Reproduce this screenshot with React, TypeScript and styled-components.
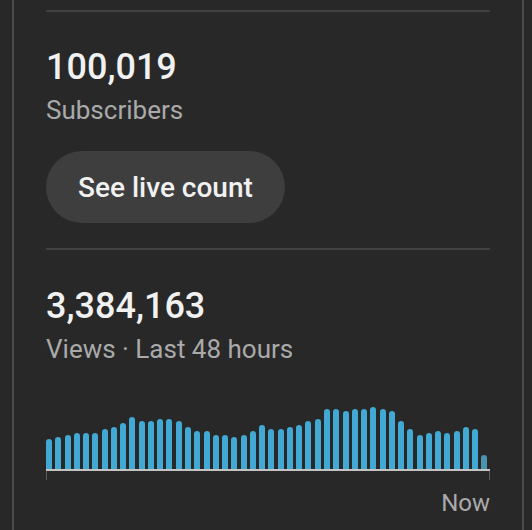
import React from "react";
import styled, { createGlobalStyle } from "styled-components";

const heights = [
  30, 32, 34, 36, 36, 36, 40, 42, 46, 52, 48, 48, 50, 50, 48, 42, 38, 38, 34, 34, 32, 34, 38, 44,
  40, 40, 42, 44, 48, 50, 60, 60, 58, 60, 60, 62, 60, 58, 48, 40, 34, 36, 38, 36, 38, 42, 40, 14,
];

const GlobalStyle = createGlobalStyle`
  html, body {
    margin: 0;
    padding: 0;
    background: #282828;
  }
  body {
    font-family: Roboto, "Noto Sans", sans-serif;
    -webkit-font-smoothing: antialiased;
  }
`;

const Card = styled.div`
  box-sizing: border-box;
  margin-left: 12px;
  width: 512px;
  height: 530px;
  border-left: 2px solid #4a4a4a;
  border-right: 2px solid #4a4a4a;
  padding: 10px 32px 0;
  overflow: hidden;
`;

const Divider = styled.div`
  height: 2px;
  background: #414141;
`;

const Section = styled.section<{ $top: number }>`
  display: flex;
  flex-direction: column;
  align-items: flex-start;
  padding-top: ${(p) => p.$top}px;
`;

const Value = styled.div`
  color: #f1f1f1;
  font-size: 36px;
  line-height: 40px;
  font-weight: 500;
`;

const Label = styled.div`
  color: #aaaaaa;
  font-size: 26px;
  line-height: 32px;
  margin-top: 7px;
`;

const PillButton = styled.button`
  margin: 25px 0;
  height: 72px;
  padding: 0 32px;
  border: none;
  border-radius: 36px;
  background: #3e3e3e;
  color: #f1f1f1;
  font-family: inherit;
  font-size: 28px;
  font-weight: 500;
  cursor: pointer;
`;

const Chart = styled.div`
  margin-top: 34px;
  width: 444px;
`;

const Bars = styled.div`
  position: relative;
  display: flex;
  align-items: flex-end;
  justify-content: space-between;
  height: 70px;
  padding-right: 2px;
  border-bottom: 2px solid #c4c4c4;

  &::before,
  &::after {
    content: "";
    position: absolute;
    bottom: -11px;
    width: 1px;
    height: 9px;
    background: #5a5a5a;
  }
  &::before {
    left: 0;
  }
  &::after {
    right: 0;
  }
`;

const Bar = styled.div<{ $muted?: boolean }>`
  width: 6px;
  border-radius: 3px 3px 0 0;
  background: ${(p) => (p.$muted ? "#4a93ad" : "#41a9d3")};
`;

const AxisLabel = styled.div`
  margin-top: 18px;
  text-align: right;
  color: #aaaaaa;
  font-size: 24px;
  line-height: 28px;
`;

export default function App() {
  return (
    <>
      <GlobalStyle />
      <Card>
        <Divider />
        <Section $top={35}>
          <Value>100,019</Value>
          <Label>Subscribers</Label>
          <PillButton>See live count</PillButton>
        </Section>
        <Divider />
        <Section $top={36}>
          <Value>3,384,163</Value>
          <Label>Views · Last 48 hours</Label>
          <Chart>
            <Bars>
              {heights.map((h, i) => (
                <Bar key={i} $muted={i === heights.length - 1} style={{ height: h }} />
              ))}
            </Bars>
            <AxisLabel>Now</AxisLabel>
          </Chart>
        </Section>
      </Card>
    </>
  );
}
